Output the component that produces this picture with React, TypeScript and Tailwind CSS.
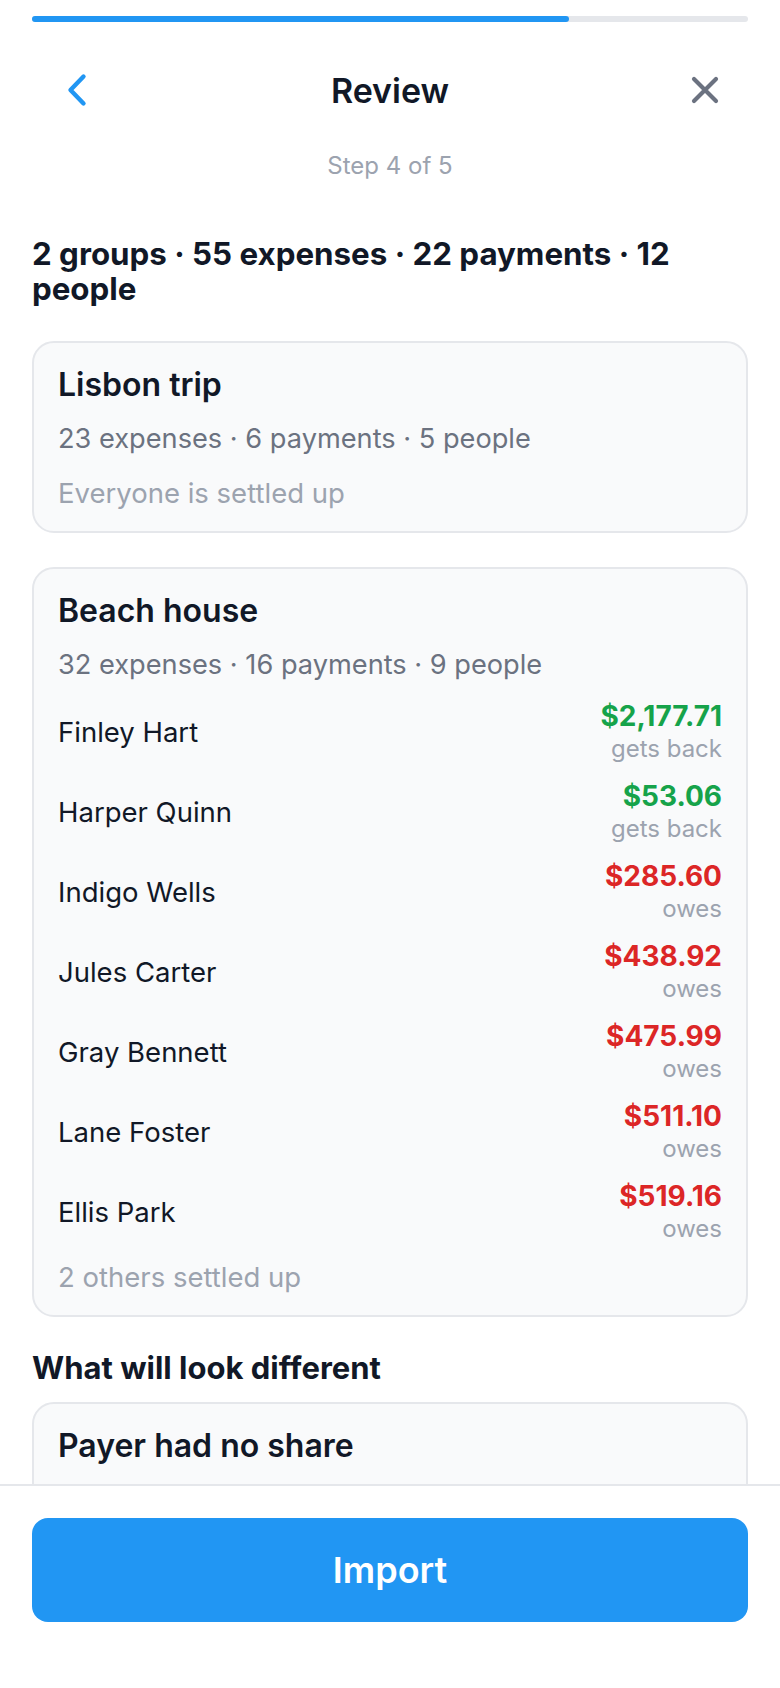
type Balance = {
  name: string
  amount: string
  getsBack: boolean
}

const BALANCES: Balance[] = [
  { name: "Finley Hart", amount: "$2,177.71", getsBack: true },
  { name: "Harper Quinn", amount: "$53.06", getsBack: true },
  { name: "Indigo Wells", amount: "$285.60", getsBack: false },
  { name: "Jules Carter", amount: "$438.92", getsBack: false },
  { name: "Gray Bennett", amount: "$475.99", getsBack: false },
  { name: "Lane Foster", amount: "$511.10", getsBack: false },
  { name: "Ellis Park", amount: "$519.16", getsBack: false },
]

const font = { fontFamily: "Inter, 'Noto Sans', sans-serif" }

function BackChevron() {
  return (
    <svg width="22" height="34" viewBox="0 0 22 34" fill="none">
      <path
        d="M17.5 3.5 L4.5 17 L17.5 30.5"
        stroke="currentColor"
        strokeWidth="4.4"
        strokeLinecap="round"
        strokeLinejoin="round"
      />
    </svg>
  )
}

function CloseIcon() {
  return (
    <svg width="28" height="28" viewBox="0 0 28 28" fill="none">
      <path
        d="M3 3 L25 25 M25 3 L3 25"
        stroke="currentColor"
        strokeWidth="4.2"
        strokeLinecap="round"
      />
    </svg>
  )
}

function BalanceRow({ b }: { b: Balance }) {
  return (
    <div className="flex items-center justify-between h-[66px]">
      <span className="text-[27.5px] leading-[40px] text-[#111827]">{b.name}</span>
      <div className="flex flex-col items-end">
        <span
          className={
            b.getsBack
              ? "text-[28px] leading-[34px] font-bold text-[#16a34a]"
              : "text-[28px] leading-[34px] font-bold text-[#dc2626]"
          }
        >
          {b.amount}
        </span>
        <span className="text-[24px] leading-[32px] text-[#9ca3af]">
          {b.getsBack ? "gets back" : "owes"}
        </span>
      </div>
    </div>
  )
}

export default function App() {
  return (
    <div className="h-[1688px] w-full flex flex-col bg-white overflow-hidden" style={font}>
      <div className="flex-1 min-h-0 overflow-hidden px-8">
        {/* Progress */}
        <div className="mt-4 h-[6px] rounded-full bg-[#e5e7eb]">
          <div className="h-full w-3/4 rounded-full bg-[#2196f3]" />
        </div>

        {/* Header */}
        <div className="mt-6 h-[88px] flex items-center justify-between">
          <button className="w-[100px] h-[88px] flex items-center pl-[34px] text-[#2196f3]">
            <BackChevron />
          </button>
          <h1 className="text-[34px] font-semibold text-[#111827]">Review</h1>
          <button className="w-[100px] h-[88px] flex items-center justify-end pr-[29px] text-[#6b7280]">
            <CloseIcon />
          </button>
        </div>

        <p className="mt-[14px] text-center text-[24px] leading-[36px] text-[#9ca3af]">Step 4 of 5</p>

        {/* Summary */}
        <h2 className="mt-[53px] text-[31.3px] leading-[35px] font-bold text-[#111827]">
          2 groups · 55 expenses · 22 payments · 12 people
        </h2>

        {/* Lisbon trip */}
        <div className="mt-[34px] rounded-[22px] border-2 border-[#e5e7eb] bg-[#f9fafb] px-6 pt-5 pb-[18px]">
          <h3 className="text-[32px] leading-[44px] font-semibold text-[#111827]">Lisbon trip</h3>
          <p className="mt-3 text-[27.2px] leading-[40px] text-[#6b7280]">23 expenses · 6 payments · 5 people</p>
          <p className="mt-[14px] text-[27.5px] leading-[40px] text-[#9ca3af]">Everyone is settled up</p>
        </div>

        {/* Beach house */}
        <div className="mt-[34px] rounded-[22px] border-2 border-[#e5e7eb] bg-[#f9fafb] px-6 pt-5 pb-[18px]">
          <h3 className="text-[32px] leading-[44px] font-semibold text-[#111827]">Beach house</h3>
          <p className="mt-3 text-[27.2px] leading-[40px] text-[#6b7280]">32 expenses · 16 payments · 9 people</p>
          <div className="mt-[14px] flex flex-col gap-[14px]">
            {BALANCES.map((b) => (
              <BalanceRow key={b.name} b={b} />
            ))}
          </div>
          <p className="mt-3 text-[27.5px] leading-[40px] text-[#9ca3af]">2 others settled up</p>
        </div>

        {/* Differences */}
        <h2 className="mt-[31px] text-[31px] leading-[40px] font-bold text-[#111827]">What will look different</h2>
        <div className="mt-[14px] h-[200px] rounded-[22px] border-2 border-[#e5e7eb] bg-[#f9fafb] px-6 pt-5">
          <h3 className="text-[32px] leading-[44px] font-semibold text-[#111827]">Payer had no share</h3>
        </div>
      </div>

      {/* Footer */}
      <div className="shrink-0 h-[204px] border-t-2 border-[#e5e7eb] bg-white px-8 pt-[32px]">
        <button className="w-full h-[104px] rounded-[16px] bg-[#2196f3] text-white text-[36px] font-semibold">
          Import
        </button>
      </div>
    </div>
  )
}
